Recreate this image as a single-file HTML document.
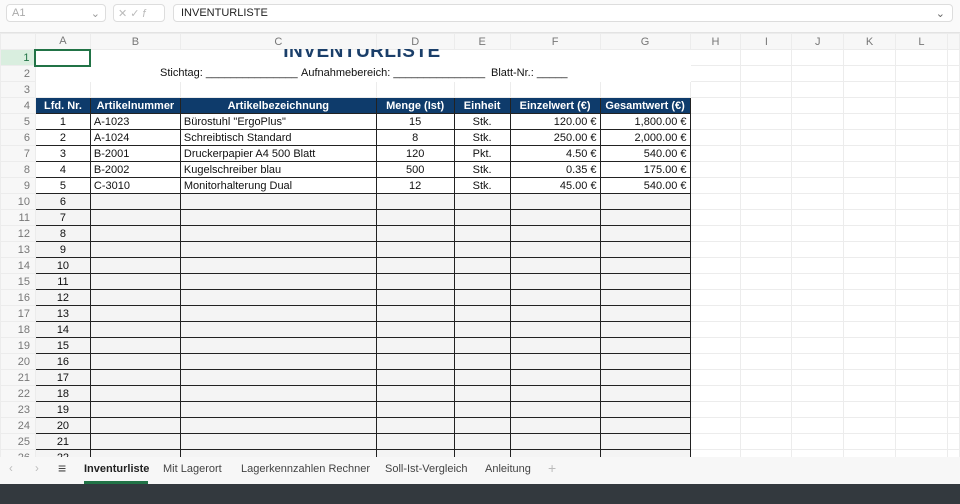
<!DOCTYPE html>
<html><head><meta charset="utf-8"><style>
*{margin:0;padding:0;box-sizing:border-box}
body{width:960px;height:504px;overflow:hidden;background:#fff;font-family:"Liberation Sans",sans-serif;position:relative}
.top{position:absolute;left:0;top:0;width:960px;height:33px;background:#fafafa;border-bottom:1px solid #e3e3e3}
.nb{position:absolute;left:6px;top:4px;width:100px;height:18px;border:1px solid #ddd;border-radius:4px;background:#fff;font-size:11px;color:#aaa;padding:2px 5px}
.fx{position:absolute;left:113px;top:4px;width:52px;height:18px;border:1px solid #ddd;border-radius:4px;background:#fff;font-size:11px;color:#bbb;padding:2px 4px;letter-spacing:3px}
.fb{position:absolute;left:173px;top:4px;width:780px;height:18px;border:1px solid #ddd;border-radius:4px;background:#fff;font-size:11px;color:#222;padding:2px 7px}
.grid{position:absolute;left:0;top:33px;width:960px;height:424px;overflow:hidden}
table{border-collapse:collapse;table-layout:fixed;font-family:"Liberation Sans",sans-serif;font-size:11px}
td{height:16px;border:1px solid #ececec;white-space:nowrap;overflow:visible;padding:0 3px;line-height:14px;color:#111}
tr.h td{background:#f7f7f7;color:#777;text-align:center;font-size:11px}
td.rh{background:#f7f7f7;color:#777;text-align:right;padding-right:5px;font-size:11px}
td.sel{background:#d9eedf;color:#217346}
tr.t td.x{border:1px solid #222}
tr.hd td.x{background:#0e3b6b;color:#fff;font-weight:bold;text-align:center;border:1px solid #222}
tr.g td.x{background:#f4f4f4}
.c{text-align:center}.r{text-align:right}
.tabs{position:absolute;left:0;top:457px;width:960px;height:27px;background:#f7f7f7;font-size:11.5px;color:#444}
.tabs span{position:absolute;top:6px}
.dark{position:absolute;left:0;top:484px;width:960px;height:20px;background:#33393e}
.title{position:absolute;left:180px;top:49px;width:364px;height:15px;overflow:hidden}
.title div{position:absolute;left:0;width:100%;text-align:center;top:-8px;font-size:19px;font-weight:bold;color:#1b3f6a;letter-spacing:0.5px}
.r2{position:absolute;top:67px;font-size:11px;color:#111}
</style></head><body>
<div class="top">
<div class="nb">A1<span style="float:right;color:#999">⌄</span></div>
<div class="fx">✕✓<i>f</i></div>
<div class="fb">INVENTURLISTE<span style="float:right;color:#666">⌄</span></div>
</div>
<div class="grid">
<table>
<colgroup><col style="width:35px"><col style="width:55px"><col style="width:90px"><col style="width:196px"><col style="width:78px"><col style="width:56px"><col style="width:90px"><col style="width:90px"><col style="width:51px"><col style="width:51px"><col style="width:52px"><col style="width:52px"><col style="width:52px"><col style="width:12px"></colgroup>
<tr class="h"><td style="background:#f7f7f7"></td><td class="sel">A</td><td>B</td><td>C</td><td>D</td><td>E</td><td>F</td><td>G</td><td>H</td><td>I</td><td>J</td><td>K</td><td>L</td><td></td></tr>
<tr><td class="rh sel">1</td><td style="border:2px solid #217346"></td><td colspan="6" style="border-color:#fff"></td><td></td><td></td><td></td><td></td><td></td><td></td></tr>
<tr><td class="rh">2</td><td colspan="7" style="border-color:#fff"></td><td></td><td></td><td></td><td></td><td></td><td></td></tr>
<tr><td class="rh">3</td><td></td><td></td><td></td><td></td><td></td><td></td><td></td><td></td><td></td><td></td><td></td><td></td><td></td></tr>
<tr class="hd"><td class="rh">4</td><td class="x">Lfd. Nr.</td><td class="x">Artikelnummer</td><td class="x">Artikelbezeichnung</td><td class="x">Menge (Ist)</td><td class="x">Einheit</td><td class="x">Einzelwert (€)</td><td class="x">Gesamtwert (€)</td><td></td><td></td><td></td><td></td><td></td><td></td></tr>
<tr class="t"><td class="rh">5</td><td class="x c">1</td><td class="x">A-1023</td><td class="x">Bürostuhl "ErgoPlus"</td><td class="x c">15</td><td class="x c">Stk.</td><td class="x r">120.00 €</td><td class="x r">1,800.00 €</td><td></td><td></td><td></td><td></td><td></td><td></td></tr>
<tr class="t"><td class="rh">6</td><td class="x c">2</td><td class="x">A-1024</td><td class="x">Schreibtisch Standard</td><td class="x c">8</td><td class="x c">Stk.</td><td class="x r">250.00 €</td><td class="x r">2,000.00 €</td><td></td><td></td><td></td><td></td><td></td><td></td></tr>
<tr class="t"><td class="rh">7</td><td class="x c">3</td><td class="x">B-2001</td><td class="x">Druckerpapier A4 500 Blatt</td><td class="x c">120</td><td class="x c">Pkt.</td><td class="x r">4.50 €</td><td class="x r">540.00 €</td><td></td><td></td><td></td><td></td><td></td><td></td></tr>
<tr class="t"><td class="rh">8</td><td class="x c">4</td><td class="x">B-2002</td><td class="x">Kugelschreiber blau</td><td class="x c">500</td><td class="x c">Stk.</td><td class="x r">0.35 €</td><td class="x r">175.00 €</td><td></td><td></td><td></td><td></td><td></td><td></td></tr>
<tr class="t"><td class="rh">9</td><td class="x c">5</td><td class="x">C-3010</td><td class="x">Monitorhalterung Dual</td><td class="x c">12</td><td class="x c">Stk.</td><td class="x r">45.00 €</td><td class="x r">540.00 €</td><td></td><td></td><td></td><td></td><td></td><td></td></tr>
<tr class="t g"><td class="rh">10</td><td class="x c">6</td><td class="x"></td><td class="x"></td><td class="x"></td><td class="x"></td><td class="x"></td><td class="x"></td><td></td><td></td><td></td><td></td><td></td><td></td></tr>
<tr class="t g"><td class="rh">11</td><td class="x c">7</td><td class="x"></td><td class="x"></td><td class="x"></td><td class="x"></td><td class="x"></td><td class="x"></td><td></td><td></td><td></td><td></td><td></td><td></td></tr>
<tr class="t g"><td class="rh">12</td><td class="x c">8</td><td class="x"></td><td class="x"></td><td class="x"></td><td class="x"></td><td class="x"></td><td class="x"></td><td></td><td></td><td></td><td></td><td></td><td></td></tr>
<tr class="t g"><td class="rh">13</td><td class="x c">9</td><td class="x"></td><td class="x"></td><td class="x"></td><td class="x"></td><td class="x"></td><td class="x"></td><td></td><td></td><td></td><td></td><td></td><td></td></tr>
<tr class="t g"><td class="rh">14</td><td class="x c">10</td><td class="x"></td><td class="x"></td><td class="x"></td><td class="x"></td><td class="x"></td><td class="x"></td><td></td><td></td><td></td><td></td><td></td><td></td></tr>
<tr class="t g"><td class="rh">15</td><td class="x c">11</td><td class="x"></td><td class="x"></td><td class="x"></td><td class="x"></td><td class="x"></td><td class="x"></td><td></td><td></td><td></td><td></td><td></td><td></td></tr>
<tr class="t g"><td class="rh">16</td><td class="x c">12</td><td class="x"></td><td class="x"></td><td class="x"></td><td class="x"></td><td class="x"></td><td class="x"></td><td></td><td></td><td></td><td></td><td></td><td></td></tr>
<tr class="t g"><td class="rh">17</td><td class="x c">13</td><td class="x"></td><td class="x"></td><td class="x"></td><td class="x"></td><td class="x"></td><td class="x"></td><td></td><td></td><td></td><td></td><td></td><td></td></tr>
<tr class="t g"><td class="rh">18</td><td class="x c">14</td><td class="x"></td><td class="x"></td><td class="x"></td><td class="x"></td><td class="x"></td><td class="x"></td><td></td><td></td><td></td><td></td><td></td><td></td></tr>
<tr class="t g"><td class="rh">19</td><td class="x c">15</td><td class="x"></td><td class="x"></td><td class="x"></td><td class="x"></td><td class="x"></td><td class="x"></td><td></td><td></td><td></td><td></td><td></td><td></td></tr>
<tr class="t g"><td class="rh">20</td><td class="x c">16</td><td class="x"></td><td class="x"></td><td class="x"></td><td class="x"></td><td class="x"></td><td class="x"></td><td></td><td></td><td></td><td></td><td></td><td></td></tr>
<tr class="t g"><td class="rh">21</td><td class="x c">17</td><td class="x"></td><td class="x"></td><td class="x"></td><td class="x"></td><td class="x"></td><td class="x"></td><td></td><td></td><td></td><td></td><td></td><td></td></tr>
<tr class="t g"><td class="rh">22</td><td class="x c">18</td><td class="x"></td><td class="x"></td><td class="x"></td><td class="x"></td><td class="x"></td><td class="x"></td><td></td><td></td><td></td><td></td><td></td><td></td></tr>
<tr class="t g"><td class="rh">23</td><td class="x c">19</td><td class="x"></td><td class="x"></td><td class="x"></td><td class="x"></td><td class="x"></td><td class="x"></td><td></td><td></td><td></td><td></td><td></td><td></td></tr>
<tr class="t g"><td class="rh">24</td><td class="x c">20</td><td class="x"></td><td class="x"></td><td class="x"></td><td class="x"></td><td class="x"></td><td class="x"></td><td></td><td></td><td></td><td></td><td></td><td></td></tr>
<tr class="t g"><td class="rh">25</td><td class="x c">21</td><td class="x"></td><td class="x"></td><td class="x"></td><td class="x"></td><td class="x"></td><td class="x"></td><td></td><td></td><td></td><td></td><td></td><td></td></tr>
<tr class="t g"><td class="rh">26</td><td class="x c">22</td><td class="x"></td><td class="x"></td><td class="x"></td><td class="x"></td><td class="x"></td><td class="x"></td><td></td><td></td><td></td><td></td><td></td><td></td></tr>
</table>
</div>
<div class="title"><div>INVENTURLISTE</div></div>
<span class="r2" style="left:160px">Stichtag: _______________</span>
<span class="r2" style="left:301px">Aufnahmebereich: _______________</span>
<span class="r2" style="left:491px">Blatt-Nr.: _____</span>
<div class="tabs">
<span style="left:9px;color:#bbb">‹</span><span style="left:35px;color:#bbb">›</span><span style="left:58px;font-size:14px;top:3px">≡</span>
<span style="left:84px;font-weight:bold;color:#222;font-size:11px">Inventurliste</span>
<div style="position:absolute;left:84px;top:24px;width:64px;height:3px;background:#217346"></div>
<span style="left:163px;font-size:11px">Mit Lagerort</span>
<span style="left:241px;font-size:11px">Lagerkennzahlen Rechner</span>
<span style="left:385px;font-size:11px">Soll-Ist-Vergleich</span>
<span style="left:485px;font-size:11px">Anleitung</span>
<span style="left:548px;color:#bbb;font-size:14px;top:3px">+</span>
</div>
<div class="dark"></div>
</body></html>
